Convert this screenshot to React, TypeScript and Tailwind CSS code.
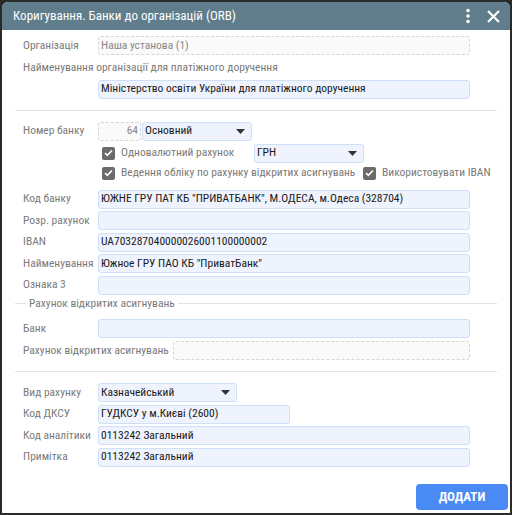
import React from "react";

function Label({ children, w = "w-[75px]" }: { children: React.ReactNode; w?: string }) {
  return <div className={`${w} shrink-0 text-[11.5px] text-[#7a7a7a] leading-none whitespace-nowrap`}>{children}</div>;
}

function Input({ value = "", className = "w-[372px]" }: { value?: string; className?: string }) {
  return (
    <div className={`${className} h-[19px] rounded-[3px] border border-[#cfdff7] bg-[#eef3fd] px-[2px] flex items-center text-[11.5px] text-[#1a1a1a] whitespace-nowrap overflow-hidden`}>
      {value}
    </div>
  );
}

function Dashed({ value = "", className = "w-[372px]", right = false }: { value?: string; className?: string; right?: boolean }) {
  return (
    <div className={`${className} h-[19px] rounded-[3px] border border-dashed border-[#d6d6d6] bg-[#fafafa] px-[2px] flex items-center ${right ? "justify-end" : ""} text-[11.5px] text-[#888] whitespace-nowrap`}>
      {value}
    </div>
  );
}

function Select({ value, className }: { value: string; className: string }) {
  return (
    <div className={`${className} h-[19px] rounded-[3px] border border-[#cfdff7] bg-[#eef3fd] pl-[2px] pr-[6px] flex items-center justify-between text-[11.5px] text-[#1a1a1a]`}>
      <span>{value}</span>
      <svg width="9" height="5" viewBox="0 0 9 5"><path d="M0 0h9L4.5 5z" fill="#333" /></svg>
    </div>
  );
}

function Check() {
  return (
    <div className="w-[13px] h-[13px] rounded-[2px] bg-[#6b6b6b] flex items-center justify-center shrink-0">
      <svg width="9" height="8" viewBox="0 0 9 8"><path d="M1 4l2.3 2.3L8 1.5" stroke="#fff" strokeWidth="1.6" fill="none" /></svg>
    </div>
  );
}

function Row({ label, children, mt = "mt-[2.5px]" }: { label: string; children: React.ReactNode; mt?: string }) {
  return (
    <div className={`flex items-center ${mt}`}>
      <Label>{label}</Label>
      {children}
    </div>
  );
}

export default function App() {
  return (
    <div className="w-[512px] h-[515px] bg-[#2a2a2a] p-[2px] font-['Roboto_Condensed',Roboto,sans-serif]">
      <div className="w-full h-full bg-white rounded-t-[6px] overflow-hidden flex flex-col">
        <div className="h-[28px] bg-[#607d8b] flex items-center pl-[11px] pr-[10px] shrink-0">
          <div className="text-white text-[13px] flex-1">Коригування. Банки до організацій (ORB)</div>
          <svg width="6" height="16" viewBox="0 0 6 16" className="mr-[16px]">
            <circle cx="3" cy="2.5" r="1.8" fill="#fff" />
            <circle cx="3" cy="8" r="1.8" fill="#fff" />
            <circle cx="3" cy="13.5" r="1.8" fill="#fff" />
          </svg>
          <svg width="13" height="13" viewBox="0 0 13 13">
            <path d="M1 1l11 11M12 1L1 12" stroke="#fff" strokeWidth="2.2" />
          </svg>
        </div>
        <div className="flex-1 relative">
          <div className="pl-[21px] pr-[40px]">
            <Row label="Організація" mt="mt-[6px]">
              <Dashed value="Наша установа (1)" />
            </Row>
            <div className="mt-[7px] text-[11.5px] text-[#7a7a7a] leading-none">Найменування організації для платіжного доручення</div>
            <div className="mt-[6px] pl-[75px]">
              <Input value="Міністерство освіти України для платіжного доручення" />
            </div>
          </div>
          <div className="mx-[13px] mt-[11px] h-px bg-[#e3e3e3]" />
          <div className="pl-[21px] pr-[40px]">
            <Row label="Номер банку" mt="mt-[11px]">
              <Dashed value="64" className="w-[43px]" right />
              <Select value="Основний" className="w-[110px] ml-[1px]" />
            </Row>
            <div className="flex items-center mt-[3px] pl-[79px]">
              <Check />
              <span className="ml-[6px] w-[133px] shrink-0 text-[11.5px] text-[#7a7a7a]">Одновалютний рахунок</span>
              <Select value="ГРН" className="w-[110px]" />
            </div>
            <div className="flex items-center mt-[1px] pl-[79px] h-[19px]">
              <Check />
              <span className="ml-[6px] text-[11.5px] text-[#7a7a7a] w-[242px] min-w-0 shrink-0 whitespace-nowrap">Ведення обліку по рахунку відкритих асигнувань</span>
              <Check />
              <span className="ml-[6px] text-[11.5px] text-[#7a7a7a] whitespace-nowrap">Використовувати IBAN</span>
            </div>
            <Row label="Код банку" mt="mt-[7px]">
              <Input value={'ЮЖНЕ ГРУ ПАТ КБ "ПРИВАТБАНК", М.ОДЕСА, м.Одеса (328704)'} />
            </Row>
            <Row label="Розр. рахунок">
              <Input />
            </Row>
            <Row label="IBAN">
              <Input value="UA703287040000026001100000002" />
            </Row>
            <Row label="Найменування">
              <Input value={'Южное ГРУ ПАО КБ "ПриватБанк"'} />
            </Row>
            <Row label="Ознака 3">
              <Input />
            </Row>
          </div>
          <div className="flex items-center mx-[13px] mt-[3px]">
            <div className="w-[11px] h-px bg-[#e3e3e3]" />
            <span className="px-[3px] text-[11.5px] text-[#7a7a7a] leading-none">Рахунок відкритих асигнувань</span>
            <div className="flex-1 h-px bg-[#e3e3e3]" />
          </div>
          <div className="pl-[21px] pr-[40px]">
            <Row label="Банк" mt="mt-[10px]">
              <Input />
            </Row>
            <div className="flex items-center mt-[3px]">
              <Label w="w-[150px]">Рахунок відкритих асигнувань</Label>
              <Dashed className="w-[297px]" />
            </div>
          </div>
          <div className="mx-[13px] mt-[11px] h-px bg-[#e3e3e3]" />
          <div className="pl-[21px] pr-[40px]">
            <Row label="Вид рахунку" mt="mt-[11px]">
              <Select value="Казначейський" className="w-[139px]" />
            </Row>
            <Row label="Код ДКСУ">
              <Input value="ГУДКСУ у м.Києві (2600)" className="w-[192px]" />
            </Row>
            <Row label="Код аналітики">
              <Input value="0113242 Загальний" />
            </Row>
            <Row label="Примітка">
              <Input value="0113242 Загальний" />
            </Row>
          </div>
          <div className="flex justify-end pr-[2px] mt-[17px]">
            <button className="w-[92px] h-[26px] rounded-[4px] bg-[#4a8af4] text-white text-[13px] font-bold">ДОДАТИ</button>
          </div>
        </div>
      </div>
    </div>
  );
}
